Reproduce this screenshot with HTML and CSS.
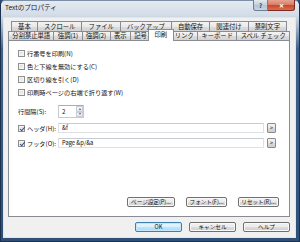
FILE: index.html
```html
<!DOCTYPE html>
<html lang="ja">
  <head>
    <meta charset="UTF-8" />
    <title>Textのプロパティ</title>
    <link rel="stylesheet" href="styles.css">
  </head>
  <body>
    <div class="window">
      <div class="titlebar">
        <span class="title">Textのプロパティ</span>
        <div class="captionBtns">
          <span class="cap help">?</span>
          <span class="cap close">&#x2715;</span>
        </div>
      </div>
      <div class="client">
        <div class="tabRow back">
          <span class="tab">基本</span>
          <span class="tab">スクロール</span>
          <span class="tab">ファイル</span>
          <span class="tab">バックアップ</span>
          <span class="tab">自動保存</span>
          <span class="tab">関連付け</span>
          <span class="tab">禁則文字</span>
        </div>
        <div class="tabRow front">
          <span class="tab">分割禁止単語</span>
          <span class="tab">強調(1)</span>
          <span class="tab">強調(2)</span>
          <span class="tab">表示</span>
          <span class="tab">記号</span>
          <span class="tab active">印刷</span>
          <span class="tab">リンク</span>
          <span class="tab">キーボード</span>
          <span class="tab">スペル チェック</span>
        </div>
        <div class="panel">
          <div class="check"><span class="box"></span>行番号を印刷(N)</div>
          <div class="check"><span class="box"></span>色と下線を無効にする(C)</div>
          <div class="check"><span class="box"></span>区切り線を引く(D)</div>
          <div class="check"><span class="box"></span>印刷時ページの右端で折り返す(W)</div>
          <div class="spacingRow">
            <span class="fieldLabel">行間隔(S):</span>
            <span class="spin">
              <span class="spinVal">2</span>
              <span class="spinArrows">
                <span class="arrow up"></span>
                <span class="arrow down"></span>
              </span>
            </span>
          </div>
          <div class="fieldRow">
            <span class="check inline"><span class="box checked"></span>ヘッダ(H):</span>
            <span class="input">&amp;f</span>
            <span class="smallBtn">&gt;</span>
          </div>
          <div class="fieldRow">
            <span class="check inline"><span class="box checked"></span>フッタ(O):</span>
            <span class="input">Page &amp;p/&amp;a</span>
            <span class="smallBtn">&gt;</span>
          </div>
          <div class="panelBtns">
            <span class="Btn wide">ページ設定(P)...</span>
            <span class="Btn">フォント(F)...</span>
            <span class="Btn">リセット(R)...</span>
          </div>
        </div>
        <div class="dialogBtns">
          <span class="Btn main default">OK</span>
          <span class="Btn main">キャンセル</span>
          <span class="Btn main">ヘルプ</span>
        </div>
      </div>
    </div>
  </body>
</html>
```

FILE: styles.css
```css
* {
  margin: 0;
  padding: 0;
  box-sizing: border-box;
  font-family: "Noto Sans CJK JP", "Noto Sans", sans-serif;
}
body {
  width: 300px;
  height: 242px;
  overflow: hidden;
  background-color: #2b4a70;
}
.window {
  width: 300px;
  height: 242px;
  display: flex;
  flex-direction: column;
  padding: 0 4px 4px 3px;
  border: 1px solid #1c3150;
  border-top-color: #7d8fa5;
  border-radius: 5px 5px 0 0;
  background: linear-gradient(
    to bottom,
    #e4eaf1 0,
    #d3dde8 14px,
    #a9bbcf 24px,
    #3f618a 48px,
    #2d4f78 100%
  );
}
.titlebar {
  height: 17px;
  display: flex;
  align-items: flex-start;
}
.title {
  margin: 2px 0 0 1px;
  font-size: 6.6px;
  line-height: 9px;
  color: #1a1a1a;
}
.captionBtns {
  margin-left: auto;
  margin-top: -1px;
  display: flex;
}
.cap {
  height: 11px;
  display: flex;
  justify-content: center;
  align-items: center;
  font-size: 6px;
  font-weight: bold;
  border: 1px solid #6d7f96;
  border-top: none;
}
.help {
  width: 15px;
  color: #2c3d52;
  border-radius: 0 0 0 3px;
  background: linear-gradient(to bottom, #e3e9f0, #c3cfdc 50%, #b3c2d2 51%, #c9d5e2);
}
.close {
  width: 27px;
  color: #fff;
  border-color: #7b2a20;
  border-left: none;
  border-radius: 0 0 3px 0;
  background: linear-gradient(to bottom, #e8a493, #d77a63 50%, #c8452b 51%, #d96e4b);
}
.client {
  flex: 1;
  display: flex;
  flex-direction: column;
  background-color: #f0f0f0;
  padding: 3px 5px 5px 4px;
  box-shadow: 0 0 0 1px #dfe6ee;
}
.tabRow {
  display: flex;
  font-size: 6.3px;
  color: #111;
}
.tabRow.back {
  height: 10px;
  margin: 0 3px 0 3px;
}
.tabRow.front {
  height: 9px;
  position: relative;
  z-index: 1;
}
.tab {
  flex: 1 1 auto;
  display: flex;
  justify-content: center;
  align-items: center;
  white-space: nowrap;
  border: 1px solid #898c95;
  border-bottom: none;
  border-right: none;
  background: linear-gradient(to bottom, #f4f4f4, #e9e9e9 50%, #dcdcdc 51%, #d2d2d2);
  line-height: 8px;
}
.tab:last-child {
  border-right: 1px solid #898c95;
}
.tab.active {
  background: #fff;
  border-right: 1px solid #898c95;
  margin: -2px -2px -1px -2px;
  padding: 0 2px 1px;
  position: relative;
  z-index: 2;
}
.tab.active + .tab {
  border-left: none;
}
.panel {
  flex: 1;
  display: flex;
  flex-direction: column;
  background-color: #fff;
  border: 1px solid #898c95;
  padding: 6px 10px 9px 9px;
  font-size: 6.2px;
  color: #111;
}
.check {
  height: 13px;
  display: flex;
  align-items: center;
  white-space: nowrap;
}
.check.inline {
  height: auto;
  width: 40px;
}
.box {
  width: 7px;
  height: 7px;
  margin-right: 2px;
  border: 1px solid #8f8f8f;
  background: linear-gradient(135deg, #dcdcdc, #f6f6f6);
  box-shadow: inset 0 0 0 1px #f4f4f4;
  position: relative;
}
.box.checked::after {
  content: "";
  position: absolute;
  left: 1.5px;
  top: 0;
  width: 2px;
  height: 3.5px;
  border: solid #2b4f8c;
  border-width: 0 1.2px 1.2px 0;
  transform: rotate(40deg);
}
.spacingRow {
  margin-top: 6px;
  height: 13px;
  display: flex;
  align-items: center;
}
.fieldLabel {
  width: 40px;
}
.spin {
  width: 26px;
  height: 13px;
  display: flex;
  border: 1px solid #c5cbd3;
  border-top-color: #abadb3;
  border-radius: 1px;
}
.spinVal {
  flex: 1;
  padding: 2px 0 0 3px;
  line-height: 8px;
}
.spinArrows {
  width: 7px;
  display: flex;
  flex-direction: column;
}
.arrow {
  flex: 1;
  border: 1px solid #c9ced6;
  background: linear-gradient(to bottom, #f5f7fa, #e1e6ec);
  display: flex;
  justify-content: center;
  align-items: center;
}
.arrow::after {
  content: "";
  border-left: 1.5px solid transparent;
  border-right: 1.5px solid transparent;
}
.arrow.up::after {
  border-bottom: 2px solid #4d5a6b;
}
.arrow.down::after {
  border-top: 2px solid #4d5a6b;
}
.fieldRow {
  margin-top: 5px;
  height: 10px;
  display: flex;
  align-items: center;
}
.input {
  width: 206px;
  height: 10px;
  border: 1px solid #dde1e6;
  border-top-color: #c8ccd2;
  border-radius: 1px;
  padding-left: 3px;
  font-size: 5.8px;
  line-height: 8px;
  white-space: nowrap;
}
.smallBtn {
  width: 9px;
  height: 10px;
  margin-left: 3px;
  display: flex;
  justify-content: center;
  align-items: center;
  font-size: 5.5px;
  color: #333;
  border: 1px solid #8b8b8b;
  border-radius: 1px;
  background: linear-gradient(to bottom, #f3f3f3, #e6e6e6 50%, #d9d9d9 51%, #cfcfcf);
}
.panelBtns {
  margin-top: auto;
  display: flex;
  justify-content: flex-end;
  gap: 11px;
}
.Btn {
  width: 41px;
  height: 10px;
  display: flex;
  justify-content: center;
  align-items: center;
  white-space: nowrap;
  font-size: 5.6px;
  color: #111;
  border: 1px solid #707070;
  border-radius: 2px;
  background: linear-gradient(to bottom, #f2f2f2, #ebebeb 50%, #dddddd 51%, #cfcfcf);
  box-shadow: inset 0 0 0 1px #f8f8f8;
}
.Btn.wide {
  width: 48px;
}
.dialogBtns {
  margin-top: 5px;
  display: flex;
  justify-content: flex-end;
  gap: 7px;
}
.Btn.main {
  width: 47px;
}
.Btn.default {
  border-color: #3c7fb1;
  background: linear-gradient(to bottom, #eaf6fd, #d9f0fc 50%, #bee6fd 51%, #a7d9f5);
  box-shadow: inset 0 0 0 1px #c4e6f8;
}
```
